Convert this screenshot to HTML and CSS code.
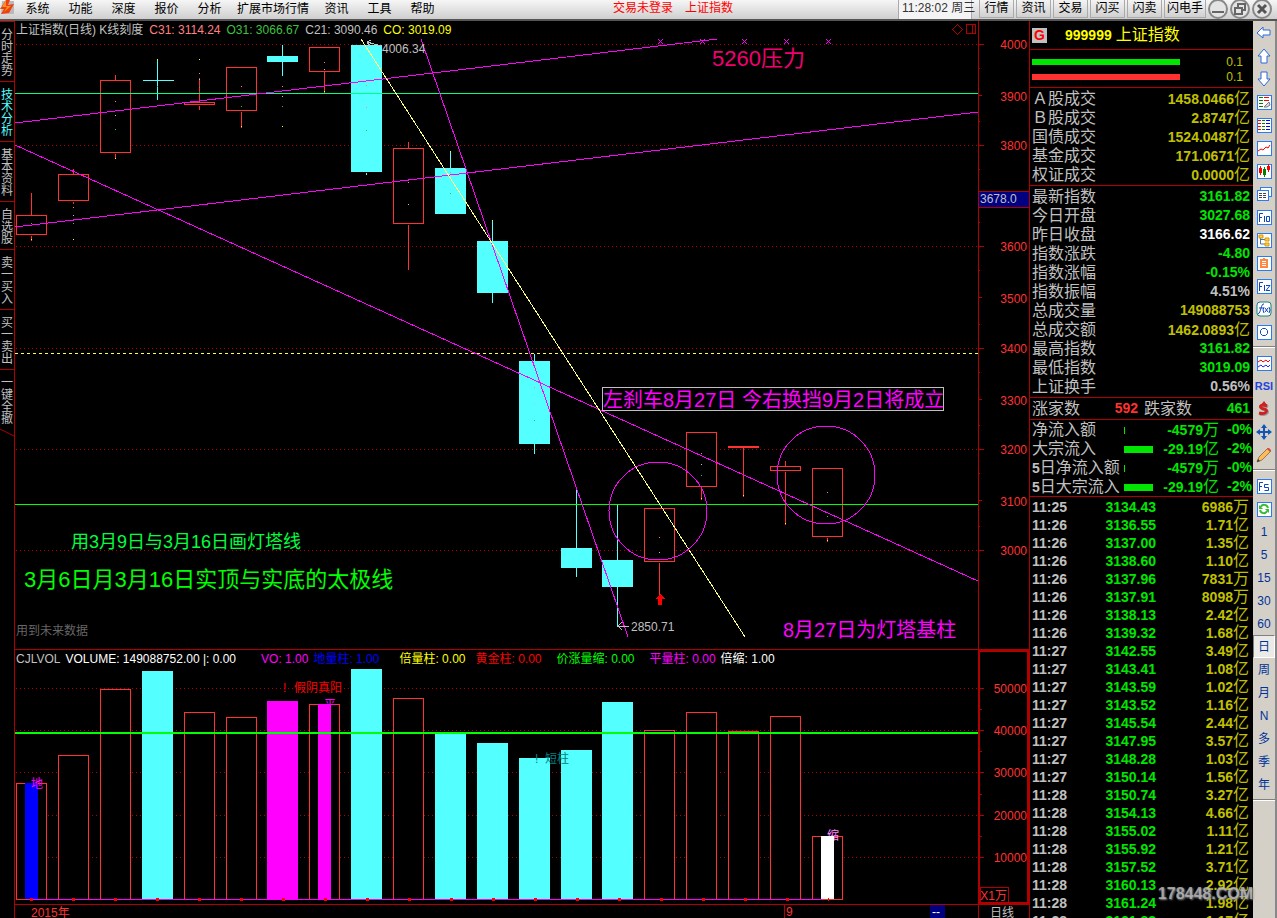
FILE: index.html
```
<!DOCTYPE html>
<html lang="zh-CN">
<head>
<meta charset="utf-8">
<title>上证指数</title>
<link rel="stylesheet" href="styles.css">
</head>
<body>
<header class="topbar">
  <nav class="menu">
    <svg class="logo" viewBox="0 0 15 16" width="15" height="16"><path d="M2 1h12v13H1z" fill="#b9b9b9"/><path d="M6 0L0 9h4L1 14l8-1 5-9-6 1 2-5z" fill="#f04010"/><path d="M6 0L2 7l5 0-3 5 7-6-5 0z" fill="#ff9020"/></svg>
    <button>系统</button><button>功能</button><button>深度</button><button>报价</button><button>分析</button><button>扩展市场行情</button><button>资讯</button><button>工具</button><button>帮助</button>
  </nav>
  <div class="session"><span>交易未登录</span><span>上证指数</span></div>
  <div class="right-tools">
    <time class="clock">11:28:02 周三</time>
    <button class="tool">行情</button><button class="tool">资讯</button><button class="tool">交易</button><button class="tool">闪买</button><button class="tool">闪卖</button><button class="tool">闪电手</button>
    <button class="round" aria-label="最小化"><svg viewBox="0 0 20 20" width="20" height="20"><circle cx="10" cy="9" r="9"/><path d="M4 12h12"/></svg></button>
    <button class="round" aria-label="还原"><svg viewBox="0 0 20 20" width="20" height="20"><circle cx="10" cy="9" r="9"/><path d="M8 7V4h7v6h-3M5 8h7v6H5z"/></svg></button>
    <button class="round" aria-label="关闭"><svg viewBox="0 0 20 20" width="20" height="20"><circle cx="10" cy="9" r="9"/><path class="cross" d="M6 5l8 8M14 5l-8 8"/></svg></button>
  </div>
</header>
<main class="workspace">
  <nav class="side-tabs">
    <button>分时走势</button><button class="active">技术分析</button><button>基本资料</button><button>自选股</button><button>卖一买入</button><button>买一卖出</button><button>一键全撤</button>
    <svg viewBox="0 0 14 8" width="14" height="8"><path d="M0 0l14 7" stroke="#b00000"/></svg>
  </nav>

  <section class="charts">
    <div class="pane">
      <svg class="plot" viewBox="15 21 1014 629">
        <path class="dots" d="M16 44.5H978M16 145.5H978M16 246.5H978M16 348.5H978M16 449.5H978M16 550.5H978"/>
        <g transform="translate(.5 .5)">
          <path class="up" d="M16 215h30v19h-30zM31 192v23M31 235v5M58 174h30v26h-30zM73 168v6M73 201v2M100 80h30v72h-30zM115 74v6M115 153v5M184 102h30v2h-30zM199 77v25M199 105v4M226 67h30v43h-30zM241 111v16M309 47h30v24h-30zM324 71v21M393 148h30v75h-30zM408 141v7M408 224v45M644 508h30v53h-30zM659 562v33M686 432h30v54h-30zM701 487v12M728 446h30v1h-30zM743 447v49M770 466h30v4h-30zM785 460v6M785 471v53M812 468h30v68h-30zM827 537v4"/>
          <path class="down-wick" d="M142 80h31M157 59v40M282 44v31M366 172v2M450 151v17M492 220v82M534 353v100M576 489v87M617 503v123"/>
        </g>
        <path class="down" d="M267 56h31v6h-31zM351 45h31v127h-31zM435 168h31v46h-31zM477 241h31v52h-31zM519 361h31v83h-31zM561 548h31v20h-31zM602 560h31v27h-31z"/>
        <path class="pt-yellow" d="M157 59h1v1h-1zM199 59h1v1h-1zM115 158h1v1h-1zM241 126h1v1h-1zM282 126h1v1h-1zM324 91h1v1h-1zM31 239h1v1h-1zM73 239h1v1h-1zM450 151h1v1h-1zM492 220h1v1h-1zM743 495h1v1h-1zM785 523h1v1h-1zM827 540h1v1h-1zM701 498h1v1h-1z"/>
        <path class="pt-rose" d="M115 101h1v1h-1zM199 73h1v1h-1zM241 86h1v1h-1zM282 86h1v1h-1zM324 62h1v1h-1zM366 85h1v1h-1zM366 107h1v1h-1zM73 207h1v1h-1zM408 182h1v1h-1zM450 172h1v1h-1zM534 387h1v1h-1zM659 537h1v1h-1zM827 492h1v1h-1zM701 453h1v1h-1z"/>
        <path class="pt-gray" d="M115 115h1v1h-1zM199 79h1v1h-1zM282 96h1v1h-1zM324 69h1v1h-1zM73 215h1v1h-1zM408 204h1v1h-1zM534 403h1v1h-1zM659 552h1v1h-1zM701 464h1v1h-1z"/>
        <path class="pt-green" d="M115 129h1v1h-1zM157 86h1v1h-1zM199 87h1v1h-1zM241 106h1v1h-1zM282 106h1v1h-1zM366 130h1v1h-1zM73 223h1v1h-1zM31 223h1v1h-1zM450 193h1v1h-1zM534 420h1v1h-1zM701 475h1v1h-1zM827 516h1v1h-1z"/>
        <path d="M15 93.500H978" stroke="#00ff80"/>
        <path d="M15 504.500H978" stroke="#00ff00"/>
        <path d="M15 353.500H978" stroke="#ffff40" stroke-dasharray="3 3"/>
        <path class="magenta" d="M15 123L717 39M15 227L978 112M15 145L978 581M421 39L628 637"/>
        <path d="M361 39L745 637" stroke="#ffff80"/>
        <circle class="magenta" cx="658" cy="511" r="49"/><circle class="magenta" cx="826" cy="475" r="49"/>
        <path class="magenta" d="M658 39l5 5m0-5l-5 5M700 39l5 5m0-5l-5 5M742 39l5 5m0-5l-5 5M784 39l5 5m0-5l-5 5M826 39l5 5m0-5l-5 5"/>
        <path d="M660 594l5 5h-3v6h-4v-6h-3z" fill="#f00"/>
        <path class="note-arrow" d="M381 46l-14-4m4-2l-4 2l3 4M629 626h-11m4-4l-4 4l4 4"/>
        <rect x="602.500" y="387.500" width="341" height="23" fill="#000" stroke="#c0c0c0"/>
        <g class="s12 gray"><text x="382" y="53">4006.34</text><text x="631" y="631">2850.71</text></g>
        <text class="s22" x="712" y="66" fill="#f00070">5260压力</text>
        <text class="s20" x="603" y="407" fill="#f0f">左刹车8月27日 今右换挡9月2日将成立</text>
        <text class="s20" x="783" y="637" fill="#f0f">8月27日为灯塔基柱</text>
        <text class="s18" x="71" y="548" fill="#00ff40">用3月9日与3月16日画灯塔线</text>
        <text class="s22" x="24" y="587" fill="#0f0">3月6日月3月16日实顶与实底的太极线</text>
        <text class="s12" x="16" y="635" fill="#666">用到未来数据</text>
        <g class="frame"><path d="M978.500 21V650M15 649.500H1029"/><path d="M979 44.500h5M979 68.500h1M979 95.500h3M979 121.500h1M979 145.500h5M979 169.500h1M979 222.500h1M979 246.500h5M979 270.500h1M979 297.500h3M979 324.500h1M979 348.500h5M979 372.500h1M979 399.500h3M979 425.500h1M979 449.500h5M979 473.500h1M979 500.500h3M979 526.500h1M979 550.500h5"/><path d="M957.500 24.500l5 5l-5 5l-5-5zM966.500 24.500h9v9h-9zM972.500 24v9"/></g>
        <rect x="979" y="191" width="50" height="16" fill="#000080"/><path class="frame" d="M979 191.500h50M979 207.500h50"/>
        <text class="s12 gray" x="980" y="203">3678.0</text>
        <g class="s12 axis"><text x="1027" y="49">4000</text><text x="1027" y="101">3900</text><text x="1027" y="150">3800</text><text x="1027" y="251">3600</text><text x="1027" y="303">3500</text><text x="1027" y="353">3400</text><text x="1027" y="405">3300</text><text x="1027" y="454">3200</text><text x="1027" y="506">3100</text><text x="1027" y="555">3000</text></g>
      </svg>
      <div class="readout price"><span class="gray">上证指数(日线) K线刻度</span><span class="rose">C31: 3114.24</span><span class="leaf">O31: 3066.67</span><span class="gray">C21: 3090.46</span><span class="yellow">CO: 3019.09</span></div>
    </div>

    <div class="pane">
      <svg class="plot" viewBox="15 650 1014 254">
        <path class="dots" d="M16 688.500H978M16 730.500H978M16 772.500H978M16 815.500H978M16 857.500H978"/>
        <path class="up" transform="translate(.5 .5)" d="M16 783h30v116h-30zM58 755h30v144h-30zM100 689h30v210h-30zM184 712h30v187h-30zM226 717h30v182h-30zM309 704h30v195h-30zM393 698h30v201h-30zM644 730h30v169h-30zM686 712h30v187h-30zM728 731h30v168h-30zM770 716h30v183h-30zM812 836h30v63h-30z"/>
        <path class="down" d="M142 671h31v228h-31zM351 669h31v230h-31zM435 734h31v165h-31zM477 743h31v156h-31zM519 758h31v141h-31zM561 750h31v149h-31zM602 702h31v197h-31z"/>
        <g class="s12"><text x="324" y="709" fill="#f0f">平</text><text x="827" y="840" fill="#f8f">缩</text><text x="283" y="692" fill="#f00">!</text><text x="294" y="692" fill="#f00">假阴真阳</text></g>
        <path d="M25 783h13v116h-13z" fill="#00f"/><path d="M267 701h31v198h-31zM318 704h13v195h-13z" fill="#f0f"/><path d="M821 836h13v63h-13z" fill="#fff"/>
        <text class="s12" x="31" y="788" fill="#f0f">地</text>
        <g class="s12" fill="#008080"><text x="535" y="763">!</text><text x="545" y="763">短柱</text></g>
        <path d="M15 733H978" stroke="#0f0" stroke-width="2"/>
        <path d="M31 899.500H822" stroke="#f0f"/>
        <path d="M30 899.500H829" stroke="#f00" stroke-width="3" stroke-dasharray="3 39"/>
        <g class="frame"><path d="M978.500 650V904M979 688.500h5M979 709.500h3M979 730.500h5M979 751.500h3M979 772.500h5M979 794.500h3M979 815.500h5M979 836.500h3M979 857.500h5"/><path d="M980.500 887.500h28v16h-28z"/><path stroke-width="2" d="M979 651h49v252h-49z"/></g>
        <g class="s12 axis"><text x="1027" y="693">50000</text><text x="1027" y="735">40000</text><text x="1027" y="777">30000</text><text x="1027" y="820">20000</text><text x="1027" y="862">10000</text><text x="1007" y="900">X1万</text></g>
      </svg>
      <div class="readout volume"><span class="gray">CJLVOL</span><span class="white">VOLUME: 149088752.00 |: 0.00</span><span class="magenta-text gap-l">VO: 1.00</span><span class="blue">地量柱: 1.00</span><span class="yellow gap-m">倍量柱: 0.00</span><span class="red gap-s">黄金柱: 0.00</span><span class="lime gap-m">价涨量缩: 0.00</span><span class="magenta-text gap-m">平量柱: 0.00</span><span class="white">倍缩: 1.00</span></div>
    </div>

    <svg class="plot" viewBox="15 904 1014 14">
      <path class="frame" d="M15 904.500H1029M784.500 904v14M978.500 904v14"/>
      <rect x="930" y="905" width="15" height="13" fill="#000080"/>
      <g class="s12"><text x="31" y="917" fill="#f33">2015年</text><text x="786" y="916" fill="#f33">9</text><text x="932" y="916" fill="#fff">--</text><text x="990" y="917" fill="#c0c0c0">日线</text></g>
    </svg>
  </section>

  <aside class="quote">
    <h1 class="q-title"><span class="badge">G</span><b>999999</b><span>上证指数</span></h1>
    <div class="strength"><div class="s-row"><i class="s-bar green-bg"></i><span>0.1</span></div><div class="s-row"><i class="s-bar red-bg"></i><span>0.1</span></div></div>
    <table class="rows olive">
      <tr><th>Ａ股成交</th><td>1458.0466<i>亿</i></td></tr><tr><th>Ｂ股成交</th><td>2.8747<i>亿</i></td></tr><tr><th>国债成交</th><td>1524.0487<i>亿</i></td></tr><tr><th>基金成交</th><td>171.0671<i>亿</i></td></tr><tr><th>权证成交</th><td>0.0000<i>亿</i></td></tr>
    </table>
    <table class="rows green">
      <tr><th>最新指数</th><td>3161.82</td></tr><tr><th>今日开盘</th><td>3027.68</td></tr><tr><th>昨日收盘</th><td class="white">3166.62</td></tr><tr><th>指数涨跌</th><td>-4.80</td></tr><tr><th>指数涨幅</th><td>-0.15%</td></tr><tr><th>指数振幅</th><td class="gray">4.51%</td></tr><tr><th>总成交量</th><td class="olive">149088753</td></tr><tr><th>总成交额</th><td class="olive">1462.0893<i>亿</i></td></tr><tr><th>最高指数</th><td>3161.82</td></tr><tr><th>最低指数</th><td>3019.09</td></tr><tr><th>上证换手</th><td class="gray">0.56%</td></tr>
    </table>
    <div class="breadth"><span>涨家数</span><b class="red-n">592</b><span>跌家数</span><b class="green">461</b></div>
    <table class="rows flows green">
      <tr><th>净流入额</th><td class="meter"><span class="thin"></span></td><td>-4579<i>万</i></td><td class="pct">-0%</td></tr>
      <tr><th>大宗流入</th><td class="meter"><span class="wide"></span></td><td>-29.19<i>亿</i></td><td class="pct">-2%</td></tr>
      <tr><th><b>5</b>日净流入额</th><td class="meter"><span class="thin"></span></td><td>-4579<i>万</i></td><td class="pct">-0%</td></tr>
      <tr><th><b>5</b>日大宗流入</th><td class="meter"><span class="wide"></span></td><td>-29.19<i>亿</i></td><td class="pct">-2%</td></tr>
    </table>
    <div class="tick-box"><table class="ticks">
      <tr><th>11:25</th><td>3134.43</td><td>6986<i>万</i></td></tr><tr><th>11:26</th><td>3136.55</td><td>1.71<i>亿</i></td></tr><tr><th>11:26</th><td>3137.00</td><td>1.35<i>亿</i></td></tr><tr><th>11:26</th><td>3138.60</td><td>1.10<i>亿</i></td></tr><tr><th>11:26</th><td>3137.96</td><td>7831<i>万</i></td></tr><tr><th>11:26</th><td>3137.91</td><td>8098<i>万</i></td></tr><tr><th>11:26</th><td>3138.13</td><td>2.42<i>亿</i></td></tr><tr><th>11:26</th><td>3139.32</td><td>1.68<i>亿</i></td></tr><tr><th>11:27</th><td>3142.55</td><td>3.49<i>亿</i></td></tr><tr><th>11:27</th><td>3143.41</td><td>1.08<i>亿</i></td></tr><tr><th>11:27</th><td>3143.59</td><td>1.02<i>亿</i></td></tr><tr><th>11:27</th><td>3143.52</td><td>1.16<i>亿</i></td></tr><tr><th>11:27</th><td>3145.54</td><td>2.44<i>亿</i></td></tr><tr><th>11:27</th><td>3147.95</td><td>3.57<i>亿</i></td></tr><tr><th>11:27</th><td>3148.28</td><td>1.03<i>亿</i></td></tr><tr><th>11:27</th><td>3150.14</td><td>1.56<i>亿</i></td></tr><tr><th>11:28</th><td>3150.74</td><td>3.27<i>亿</i></td></tr><tr><th>11:28</th><td>3154.13</td><td>4.66<i>亿</i></td></tr><tr><th>11:28</th><td>3155.02</td><td>1.11<i>亿</i></td></tr><tr><th>11:28</th><td>3155.92</td><td>1.21<i>亿</i></td></tr><tr><th>11:28</th><td>3157.52</td><td>3.71<i>亿</i></td></tr><tr><th>11:28</th><td>3160.13</td><td>2.92<i>亿</i></td></tr><tr><th>11:28</th><td>3161.24</td><td>1.98<i>亿</i></td></tr><tr><th>11:28</th><td>3161.82</td><td>1.17<i>亿</i></td></tr>
    </table></div>
    <span class="watermark">178448.COM</span>
  </aside>

  <nav class="toolbar">
    <button aria-label="后退"><svg viewBox="0 0 16 16"><path class="arrow" d="M1 8l6-6v3h7v5H7v3z"/></svg></button>
    <button aria-label="向上"><svg viewBox="0 0 16 16"><path class="arrow" d="M8 1l6 7h-3v7H5V8H2z"/></svg></button>
    <button aria-label="向下"><svg viewBox="0 0 16 16"><path class="arrow" d="M8 15l6-7h-3V1H5v7H2z"/></svg></button>
    <button aria-label="列表设置"><svg viewBox="0 0 16 16"><path class="box" d="M1 1h14v14H1z"/><path d="M3 3.500h4M3 6.500h4M3 9.500h4M3 12.500h4" stroke="green"/><path d="M8 3.500h5M8 6.500h5" stroke="red"/><path d="M8 13l5-5 1 3-3 2z" fill="#ddd" stroke="#777"/></svg></button>
    <button aria-label="报价列表"><svg viewBox="0 0 16 16"><path class="box" d="M1 1h14v14H1z"/><path d="M2 3.500h3M2 6.500h3M2 9.500h3M2 12.500h3" stroke="red"/><path d="M6 3.500h3M6 6.500h3M6 9.500h3M6 12.500h3" stroke="green"/><path d="M10 3.500h4M10 6.500h4M10 9.500h4M10 12.500h4" stroke="blue"/></svg></button>
    <button aria-label="分时图"><svg viewBox="0 0 16 16"><path class="box" d="M1 1h14v14H1z"/><path d="M2 11l3-2 2 1 3-3 2 1 2-3" fill="none" stroke="red"/></svg></button>
    <button aria-label="K线图"><svg viewBox="0 0 16 16"><path class="box" d="M1 1h14v14H1z"/><path d="M3 5h3v5H3zM4 3h1v9H4zM11 3h3v4h-3zM12 1h1v8h-1z" fill="red"/><path d="M7 6h3v6H7zM8 4h1v10H8z" fill="green"/></svg></button>
    <button aria-label="多窗口"><svg viewBox="0 0 16 16"><path class="box" d="M4 1h11v9H4z"/><path class="box" d="M1 4h11v10H1z"/><path d="M3 7.500h3M7 7.500h3M3 9.500h3M7 9.500h3M3 11.500h3M7 11.500h3" stroke="#444"/></svg></button>
    <button aria-label="F10"><svg viewBox="0 0 16 16"><path class="box" d="M1 1h14v14H1z"/><path class="stroke" d="M3.500 13V4.500H7M3.500 8.500H6M8.500 7v6M10.500 7.500h3v5h-3z"/></svg></button>
    <button aria-label="板块树"><svg viewBox="0 0 16 16"><path class="box" d="M1 1h14v14H1z"/><path d="M4.500 5v7H10M4 7.500h6" fill="none" stroke="#47a"/><path d="M3 3h4v3H3zM9 6h4v3H9zM9 11h4v3H9z" fill="#fc4" stroke="#d90"/></svg></button>
    <button aria-label="自选"><svg viewBox="0 0 16 16"><path class="box" d="M1 1h14v14H1z"/><path d="M4 4h3V3h2v1h3v9H4z" fill="#f84"/><path d="M6 6.500h4M6 8.500h4M6 10.500h4" stroke="#fff"/></svg></button>
    <button aria-label="F12"><svg viewBox="0 0 16 16"><path class="box" d="M1 1h14v14H1z"/><path class="stroke" d="M3.500 13V4.500H7M3.500 8.500H6M8.500 7v6M10 7.500h4l-4 5h4"/></svg></button>
    <button aria-label="公式"><svg viewBox="0 0 16 16"><rect x="1" y="1" width="14" height="14" rx="3" fill="#fff" stroke="#178080"/><path class="stroke" d="M8 3c-3-1-3 9-6 10M3 7h4M8 6q-2 3 0 6M9 7l3 4m0-4l-3 4M13 6q2 3 0 6"/></svg></button>
    <button aria-label="圆"><svg viewBox="0 0 16 16"><path class="box" d="M1 1h14v14H1z"/><path class="stroke" d="M6.500 4.500h3l2 2v3l-2 2h-3l-2-2v-3z"/></svg></button>
    <hr>
    <button aria-label="指标线"><svg viewBox="0 0 16 16"><path class="box" d="M1 1h14v14H1z"/><path d="M2 7l3-2 2 2 3-2 2 2 2-2" fill="none" stroke="red"/><path d="M2 12l3-2 2 2 3-2 2 2 2-2" fill="none" stroke="#22f"/></svg></button>
    <button class="rsi">RSI</button>
    <button aria-label="资金"><svg viewBox="0 0 16 16"><path d="M12 6C5 2 3 8 9 9c5 1 2 6-5 4" fill="none" stroke="#999" stroke-width="3"/><path d="M11 5C4 2 2 7 8 8c5 1 2 6-5 4" fill="none" stroke="#c22" stroke-width="3"/><path d="M8 0l3 4H5z" fill="#c22"/></svg></button>
    <button aria-label="移动"><svg viewBox="0 0 16 16"><path d="M8 0l3 4H9v3h3V5l4 3-4 3V9H9v3h2l-3 4-3-4h2V9H4v2L0 8l4-3v2h3V4H5z" fill="#15b"/></svg></button>
    <button aria-label="画笔"><svg viewBox="0 0 16 16"><path d="M1 15l2-5L12 1l3 3-9 9z" fill="#fb5" stroke="#975"/><path d="M11 2l3 3 1-2-2-2z" fill="#d44"/><path d="M1 15l1-3 2 2z" fill="#333"/></svg></button>
    <hr>
    <button aria-label="F5"><svg viewBox="0 0 16 16"><path class="box" d="M1 1h14v14H1z"/><path class="stroke" d="M3.500 13V4.500H7M3.500 8.500H6M12.500 6.500h-4v3h4v3h-4"/></svg></button>
    <button aria-label="刷新"><svg viewBox="0 0 16 16"><path class="box" d="M1 1h14v14H1z"/><path d="M12 7C11 3 6 3 5 6M4 9c1 4 6 4 7 1" fill="none" stroke="#3b3" stroke-width="2"/><path d="M3 4v4h4zM13 12V8H9z" fill="#3b3"/></svg></button>
    <button>1</button><button>5</button><button>15</button><button>30</button><button>60</button><button class="pressed">日</button><button>周</button><button>月</button><button>N</button><button>多</button><button>季</button><button>年</button>
    <hr>
  </nav>
</main>
</body>
</html>
```
FILE: styles.css
```
* { box-sizing: border-box; }
body {
  margin: 0;
  height: 100vh;
  display: flex;
  flex-direction: column;
  overflow: hidden;
  background: #000;
  color: #c0c0c0;
  font: 12px/16px "Liberation Sans", "Noto Sans CJK SC", sans-serif;
}
button { font: inherit; color: inherit; background: none; border: 0; padding: 0; margin: 0; }
i { font-style: normal; }

.topbar {
  flex: none;
  height: 21px;
  display: flex;
  justify-content: space-between;
  background: linear-gradient(#f6f6f6, #cfcfcf);
  border-bottom: 2px solid #555;
  color: #000;
}
.menu, .right-tools { display: flex; white-space: nowrap; }
.logo { margin-right: 1px; }
.menu button { min-width: 43px; padding: 0 6px 2px; }
.session { display: flex; gap: 12px; color: #f00; padding-left: 4px; }
.right-tools { gap: 2px; padding-right: 5px; }
.clock {
  width: 74px;
  margin-right: 5px;
  padding-left: 3px;
  background: #f4f4f4;
  border: solid #aaa;
  border-width: 0 1px;
  color: #333;
}
.tool { min-width: 35px; height: 18px; padding: 0 2px 2px; background: linear-gradient(#f4f4f4, #d0d0d0); border: 1px solid #aaa; border-top: 0; }
.round { width: 20px; height: 19px; }
.round svg { display: block; }
.round circle { fill: #e4e4e4; stroke: #888; stroke-width: 2; }
.round path { fill: none; stroke: #666; stroke-width: 2; }
.round .cross { stroke: #555; stroke-width: 3; }

.workspace { flex: 1; min-height: 0; display: flex; }

.side-tabs { flex: none; width: 15px; display: flex; flex-direction: column; border-right: 1px solid #b00000; }
.side-tabs button {
  padding: 7px 0 4px 1px;
  width: 14px;
  border-top: 1px solid #b00000;
  line-height: 12px;
  font-size: 12px;
  white-space: normal;
  word-break: break-all;
  text-align: left;
}
.side-tabs .active { color: #5ff; }

.charts { flex: 1; min-width: 0; display: grid; grid-template-rows: 629fr 254fr 14px; }
.pane { display: grid; min-height: 0; }
.pane > * { grid-area: 1 / 1; min-height: 0; }
.plot { display: block; width: 100%; height: 100%; shape-rendering: crispEdges; }
.readout { display: flex; align-self: start; white-space: nowrap; padding: 1px 0 0 1px; }
.price { gap: 6px; }
.volume { gap: 5px; }
.gap-l { margin-left: 20px; }
.gap-m { margin-left: 10px; }
.gap-s { margin-left: 5px; }
.yellow.gap-m { margin-left: 15px; }

.dots { stroke: #b00000; stroke-dasharray: 1 3; }
.up { fill: #000; stroke: #ff3232; }
.down { fill: #54ffff; }
.down-wick { stroke: #54ffff; }
.magenta { fill: none; stroke: #f0f; }
.note-arrow { fill: none; stroke: #c0c0c0; }
.frame { fill: none; stroke: #b00000; }
.pt-yellow { fill: #ff0; }
.pt-rose { fill: #ff8080; }
.pt-gray { fill: #c0c0c0; }
.pt-green { fill: #40c040; }
.s12 { font-size: 12px; }
.s18 { font-size: 18px; }
.s20 { font-size: 20px; }
.s22 { font-size: 22px; }
.axis { fill: #ff3232; text-anchor: end; }

.gray { color: #c0c0c0; fill: #c0c0c0; }
.white { color: #fff; }
.rose { color: #ff8080; }
.leaf { color: #40c040; }
.yellow { color: #ff0; }
.red { color: #f00; }
.lime { color: #0f0; }
.blue { color: #00f; }
.magenta-text { color: #f0f; }
.green { color: #00e600; }
.olive { color: #c0c000; }
.red-n { color: #ff3232; }

.quote { position: relative; flex: none; width: 224px; display: flex; flex-direction: column; border-left: 1px solid #b00000; font-size: 16px; }
.quote > * { border-bottom: 1px solid #b00000; }
.q-title { display: flex; align-items: center; height: 29px; margin: 0; padding-left: 2px; color: #ff0; font-size: 16px; font-weight: 400; }
.q-title b { margin: 0 4px 0 18px; font-size: 14px; }
.badge { width: 15px; height: 15px; background: #c0c0c0; color: #f00; font: bold 14px/15px "Liberation Sans", sans-serif; text-align: center; }
.strength { height: 38px; padding: 4px 10px 3px 2px; color: #c0c000; font-size: 12px; }
.s-row { display: flex; align-items: center; justify-content: space-between; height: 15px; }
.s-bar { width: 148px; height: 6px; }
.green-bg { background: #00e600; }
.red-bg { background: #ff3232; }
.quote table { border-collapse: collapse; table-layout: auto; }
.rows { display: block; padding: 1px 3px 1px 2px; }
.rows tbody { display: block; }
.rows tr { display: flex; justify-content: space-between; height: 19px; line-height: 19px; }
.rows th { padding: 0; color: #c0c0c0; font-weight: 400; }
.rows td, .rows b { padding: 0; font-size: 14px; font-weight: 700; }
.quote i { font-size: 16px; font-weight: 400; }
.breadth { display: flex; height: 22px; padding: 0 3px 0 2px; line-height: 21px; }
.breadth b { font-size: 14px; }
.breadth .red-n { flex: 1; text-align: right; margin-right: 6px; }
.breadth .green { flex: 1; text-align: right; }
.flows { padding: 0 1px 0 2px; }
.flows tr { display: grid; grid-template-columns: 92px 30px 1fr 33px; }
.flows th { text-align: left; white-space: nowrap; }
.flows td { text-align: right; white-space: nowrap; }
.flows .meter { display: flex; align-items: center; }
.thin { width: 1px; height: 7px; background: #00e600; }
.wide { width: 29px; height: 7px; background: #00e600; }
.quote .tick-box { flex: 1; min-height: 0; overflow: hidden; border: 0; padding: 1px 4px 0 2px; }
.ticks { width: 100%; }
.ticks tr { height: 18px; line-height: 18px; }
.ticks th, .ticks td { padding: 0; height: 18px; line-height: 17px; font-size: 14px; font-weight: 700; text-align: right; }
.ticks i { line-height: 1; }
.ticks th { width: 36px; text-align: left; }
.ticks td { color: #00e600; width: 88px; }
.ticks td + td { color: #c0c000; width: auto; }
.quote .watermark { position: absolute; right: 0; bottom: 12px; border: 0; font: bold 16px/24px "Liberation Sans Narrow", "Liberation Sans", sans-serif; color: rgba(190, 190, 190, .8); text-shadow: 1px 1px 2px #888; }

.toolbar { flex: none; width: 24px; display: flex; flex-direction: column; background: #d4d0c8; border-right: 2px solid #888; color: #003399; }
.toolbar button { height: 23px; flex: none; display: flex; align-items: center; justify-content: center; }
.toolbar svg { width: 16px; height: 16px; }
.toolbar hr { width: 100%; height: 2px; margin: 3px 0; border: solid; border-width: 1px 0; border-color: #808080 #fff #fff; flex: none; }
.toolbar .rsi { font-weight: 700; font-size: 11px; color: #2244dd; }
.toolbar .pressed { background: #eceae6; border: 1px solid; border-color: #808080 #fff #fff #808080; }
.arrow { fill: #fff; stroke: #2a68e0; }
.box { fill: #fff; stroke: #2a7cf0; shape-rendering: crispEdges; }
.stroke { fill: none; stroke: #1144bb; }
```
